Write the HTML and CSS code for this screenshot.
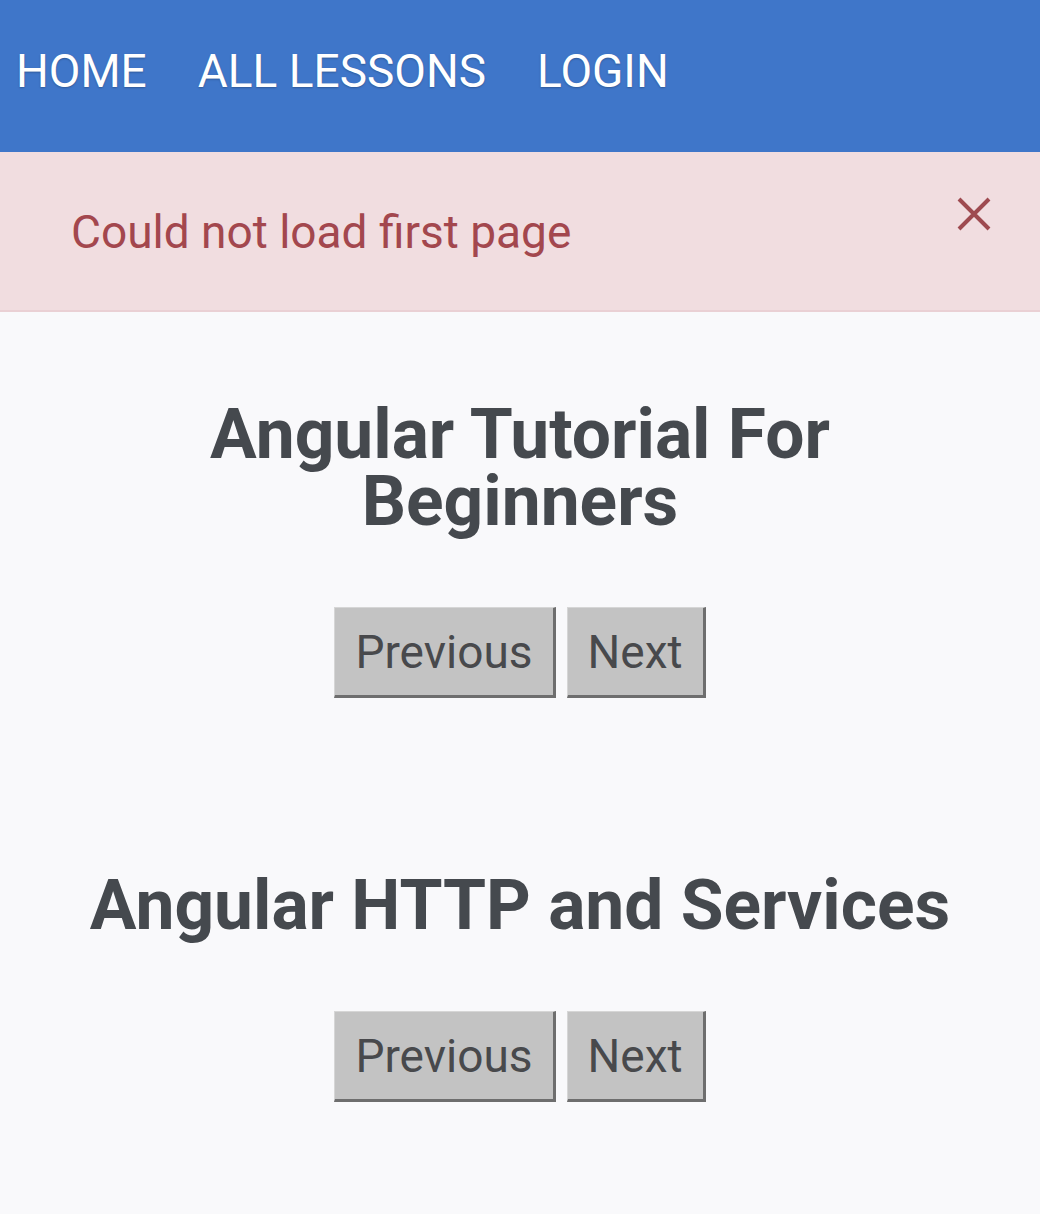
FILE: index.html
```html
<!DOCTYPE html>
<html>
<head>
<meta charset="utf-8">
<link rel="stylesheet" href="styles.css">
</head>
<body>
<nav class="nav">
  <a class="nav-link">HOME</a>
  <a class="nav-link">ALL LESSONS</a>
  <a class="nav-link">LOGIN</a>
</nav>
<div class="alert">
  <span class="alert-text">Could not load first page</span>
  <svg class="close" width="36" height="36" viewBox="0 0 36 36"><path d="M3 3 L33 33 M33 3 L3 33" stroke="#9e4a50" stroke-width="4" fill="none"/></svg>
</div>
<main class="main">
  <section class="lesson">
    <h2 class="title">Angular Tutorial For<br>Beginners</h2>
    <div class="buttons">
      <button class="btn">Previous</button>
      <button class="btn">Next</button>
    </div>
  </section>
  <section class="lesson">
    <h2 class="title">Angular HTTP and Services</h2>
    <div class="buttons">
      <button class="btn">Previous</button>
      <button class="btn">Next</button>
    </div>
  </section>
</main>
</body>
</html>
```
FILE: styles.css
```css
html, body {
  margin: 0;
  padding: 0;
  background: #f9f9fb;
  font-family: Roboto, "Noto Sans", sans-serif;
}
.nav {
  height: 152px;
  background: #3f76c9;
  display: flex;
  align-items: center;
  padding-left: 16px;
  gap: 51px;
  box-sizing: border-box;
  padding-bottom: 10px;
}
.nav-link {
  color: #ffffff;
  font-size: 46px;
  font-weight: 400;
  text-shadow: 0 1px 2px rgba(0,0,0,0.25);
}
.alert {
  height: 160px;
  background: #f1dde0;
  border-bottom: 2px solid #ead0d4;
  box-sizing: border-box;
  display: flex;
  align-items: flex-start;
  justify-content: space-between;
  padding: 53px 48px 0 71px;
}
.alert-text {
  color: #a3474e;
  font-size: 46px;
  line-height: 1;
  margin-top: 4px;
}
.close {
  margin-top: -9px;
}
.main {
  display: flex;
  flex-direction: column;
  align-items: center;
  padding-top: 89px;
}
.lesson {
  display: flex;
  flex-direction: column;
  align-items: center;
  margin-bottom: 174px;
}
.lesson:last-child {
  margin-bottom: 0;
}
.title {
  margin: 0;
  color: #45494e;
  font-size: 69.5px;
  font-weight: 700;
  line-height: 67px;
  text-align: center;
}
.buttons {
  display: flex;
  gap: 11px;
  margin-top: 72px;
}
.btn {
  font-family: Roboto, sans-serif;
  font-size: 46px;
  color: #48494c;
  background: #c3c3c3;
  border: none;
  border-right: 3px solid #6e6e6e;
  border-bottom: 3px solid #6e6e6e;
  border-top: 1px solid #d6d6d6;
  border-left: 1px solid #d6d6d6;
  height: 91px;
  padding: 0 20px;
}
```
